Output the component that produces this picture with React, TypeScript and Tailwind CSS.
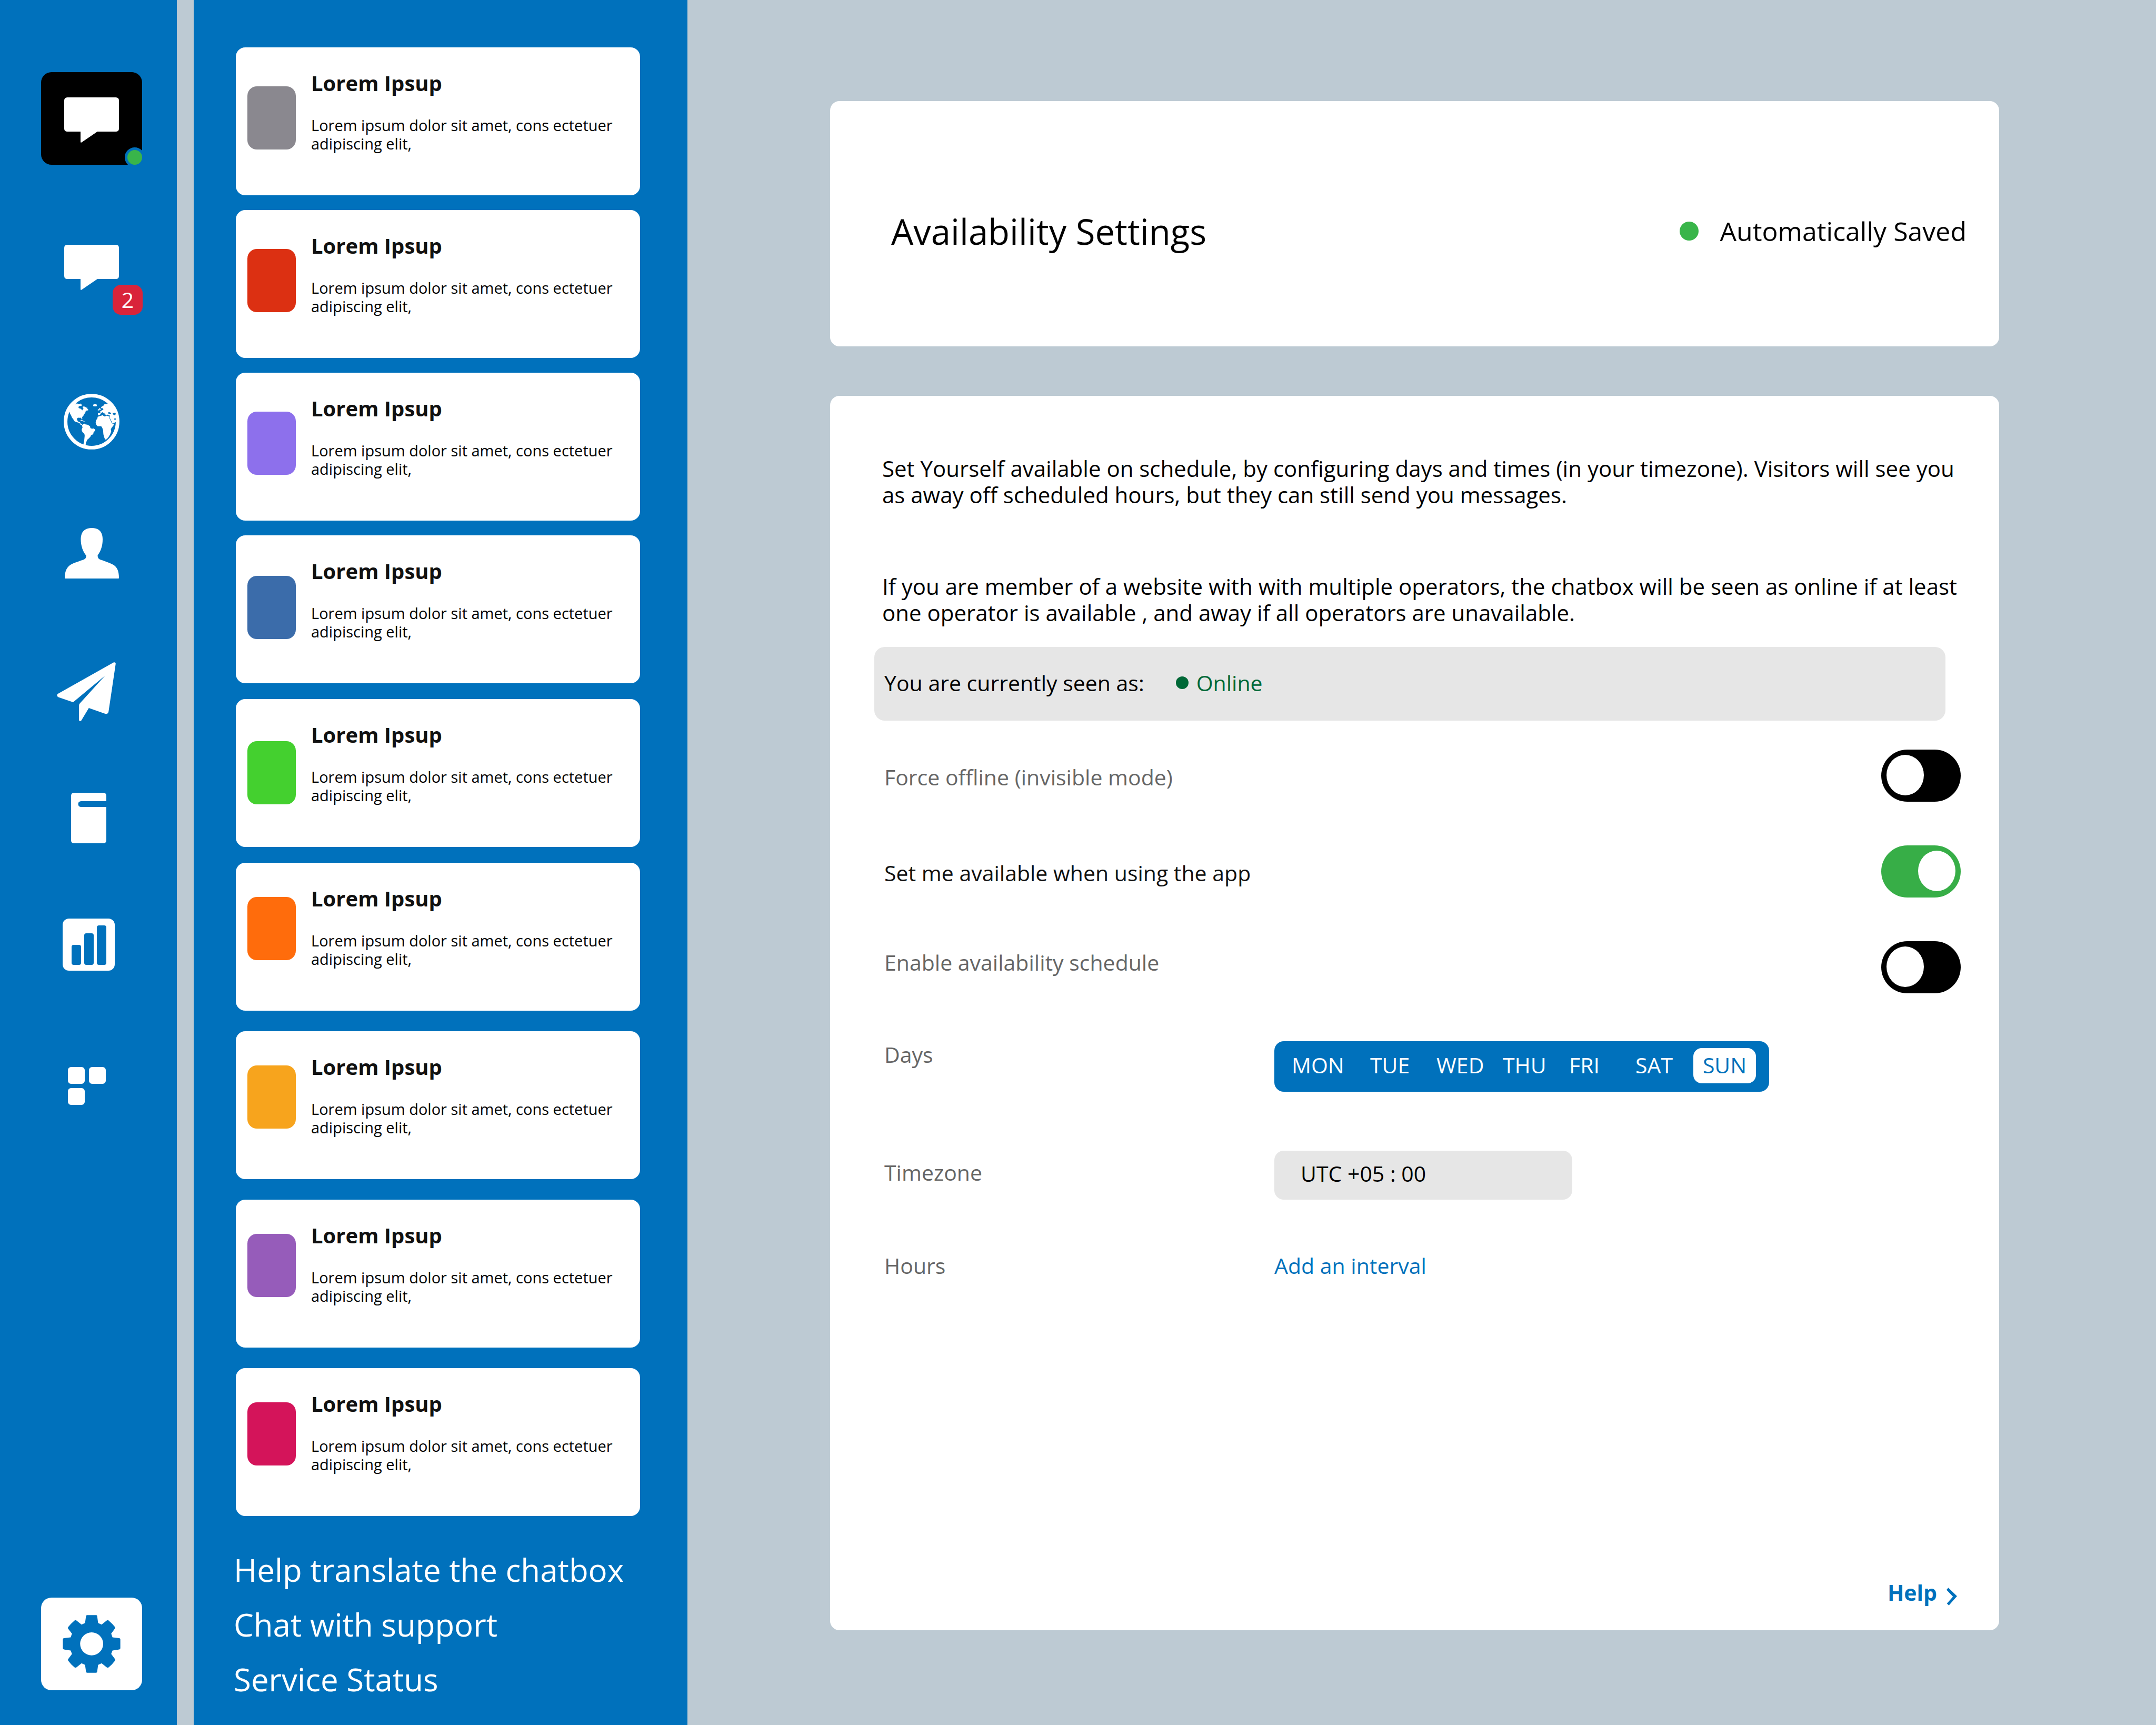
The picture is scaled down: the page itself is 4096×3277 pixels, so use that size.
import React, { useState } from "react";

const BubbleIcon = () => (
  <svg viewBox="0 0 104 86" className="h-[86px] w-[104px]" fill="#fff" aria-hidden="true">
    <path d="M6 0H98Q104 0 104 6V59Q104 65 98 65H63L33 85.5Q31 86.5 31 84.5V65H6Q0 65 0 59V6Q0 0 6 0Z" />
  </svg>
);

const GlobeIcon = () => (
  <svg viewBox="25 30 412 412" className="size-[106px]" fill="#fff" aria-hidden="true">
    <circle cx="231" cy="236" r="192" fill="none" stroke="#fff" strokeWidth="27" />
    <path d="M67 160L72 178L80 190L85 204L98 221L106 234L120 240L133 243L143 248L147 256L156 262L164 260L152 250L147 250L146 240L134 237L128 230L123 220L124 212L132 207L145 208L152 207L156 214L160 222L163 216L160 206L166 196L172 190L176 180L184 173L180 168L192 166L186 160L190 155L206 152L206 147L198 138L200 132L190 133L184 126L176 124L166 124L166 134L172 140L166 144L164 152L158 150L154 142L140 138L134 132L136 124L146 120L158 120L156 106L152 110L148 102L140 108L136 104L130 106L124 100L112 110L122 96L90 98L60 130Z" />
    <path d="M146 226L160 224L176 233L164 232L152 229ZM164 236L182 234L186 237L168 239Z" />
    <path d="M160 262L170 254L180 251L186 256L200 258L214 266L220 272L222 284L234 288L246 287L256 292L257 303L246 314L243 328L226 338L222 348L210 360L198 370L194 382L188 392L190 400L186 408L192 418L168 416L176 380L180 340L178 326L166 316L159 304L158 292L164 280Z" />
    <path d="M276 200L300 192L314 188L320 194L328 198L342 192L358 196L366 214L376 236L384 250L396 252L394 262L380 280L373 292L376 308L370 324L362 340L352 358L338 370L330 366L322 346L318 328L316 300L310 282L302 270L276 270L266 260L261 244L264 226L274 212Z" />
    <path d="M352 104L326 108L318 118L304 126L300 136L316 138L318 148L300 156L292 164L300 174L310 166L320 172L326 184L326 172L330 170L334 186L344 190L344 180L350 188L366 190L362 204L372 222L384 248L400 244L414 236L425 236L425 170L400 120Z" />
    <path d="M278 174L292 171L300 174L292 187L278 189ZM286 138L294 136L299 150L288 152ZM277 146L285 144L285 152L277 154Z" />
    <rect x="243" y="108" width="27" height="15" rx="6" />
    <path d="M352 168L362 166L376 172L374 179L354 177ZM386 172L396 174L404 168L410 178L404 190L396 186L388 182Z" fill="#0071bc" />
    <circle cx="404" cy="217" r="6" fill="#0071bc" />
    <path d="M359 200Q372 222 382 248M324 377Q350 364 366 340" fill="none" stroke="#0071bc" strokeWidth="3" />
  </svg>
);

const PersonIcon = () => (
  <svg viewBox="87 18 402 374" className="h-24 w-[103px]" fill="#fff" aria-hidden="true">
    <path d="M288 18C236 18 206 45 206 103C206 150 222 195 246 222C246 240 240 248 226 253C195 264 160 275 140 285C105 302 87 335 87 388Q87 392 91 392H485Q489 392 489 388C489 335 475 302 436 285C412 274 380 262 352 253C338 248 331 240 331 220C355 190 368 150 368 103C368 45 340 18 288 18Z" />
  </svg>
);

const PlaneIcon = () => (
  <svg viewBox="30 1013 474 439" className="h-28 w-[121px]" fill="#fff" aria-hidden="true">
    <path d="M452 1015Q468 1010 468 1025L415 1380Q411 1402 388 1396L268 1354L212 1447Q205 1455 195 1447V1335Q195 1327 201 1320L390 1112L157 1306Q151 1312 145 1309L42 1274Q24 1263 36 1249Z" />
  </svg>
);

const BookIcon = () => (
  <svg viewBox="0 0 67 96" className="h-24 w-[67px]" fill="#fff" aria-hidden="true">
    <path d="M6 0H61Q67 0 67 6V16H19a5.5 5.5 0 0 0 0 11H67V90Q67 96 61 96H6Q0 96 0 90V6Q0 0 6 0Z" />
  </svg>
);

const ChartIcon = () => (
  <svg viewBox="0 0 99 99" className="size-[99px]" aria-hidden="true">
    <rect width="99" height="99" rx="12" fill="#fff" />
    <g fill="#0071bc">
      <rect x="17" y="50" width="18" height="38" rx="4" />
      <rect x="41" y="28" width="18" height="60" rx="4" />
      <rect x="65" y="13" width="18" height="75" rx="4" />
    </g>
  </svg>
);

const BlocksIcon = () => (
  <svg viewBox="0 0 78 72" className="h-[72px] w-[78px]" fill="#fff" aria-hidden="true">
    <rect width="32" height="32" rx="6" />
    <rect x="40" width="32" height="32" rx="6" />
    <rect y="40" width="32" height="32" rx="6" />
  </svg>
);

const GearIcon = () => (
  <svg viewBox="462 436 429 430" className="size-[110px]" fill="#0071bc" aria-hidden="true">
    <path
      fillRule="evenodd"
      d="M643 437H711Q718 437 718 445L725 496L751 507L789 477Q797 471 803 477Q832 502 850 525Q855 531 849 538L822 575L832 602L882 608Q890 609 890 617V683Q890 691 882 692L832 700L822 725L851 764Q855 770 850 776Q830 803 803 825Q797 829 789 825L751 795L725 806L718 856Q717 865 709 865H644Q636 865 635 856L628 806L602 795L564 825Q557 829 550 825Q523 803 503 776Q499 770 502 764L531 725L521 700L471 692Q463 691 463 683V617Q463 609 471 608L521 602L531 575L502 538Q498 531 503 525Q521 502 550 477Q557 471 564 477L602 507L628 496L635 445Q636 437 643 437ZM677 565a85.500 85.500 0 1 0 0 171a85.500 85.500 0 1 0 0-171Z"
    />
  </svg>
);

const conversations = [
  { swatch: "bg-[#8a888f]", top: "mt-[74px]", gap: "" },
  { swatch: "bg-[#dc3012]", top: "mt-[74px]", gap: "mt-[28px]" },
  { swatch: "bg-[#8d70ec]", top: "mt-[74px]", gap: "mt-[28px]" },
  { swatch: "bg-[#3b6caa]", top: "mt-[77px]", gap: "mt-[28px]" },
  { swatch: "bg-[#44d02f]", top: "mt-[80px]", gap: "mt-[30px]" },
  { swatch: "bg-[#ff6c0c]", top: "mt-[65px]", gap: "mt-[30px]" },
  { swatch: "bg-[#f7a41d]", top: "mt-[65px]", gap: "mt-[39px]" },
  { swatch: "bg-[#965cba]", top: "mt-[65px]", gap: "mt-[39px]" },
  { swatch: "bg-[#d4145a]", top: "mt-[65px]", gap: "mt-[39px]" },
];

const days = [
  { name: "MON", width: "w-[149px]" },
  { name: "TUE", width: "w-[126px]" },
  { name: "WED", width: "w-[126px]" },
  { name: "THU", width: "w-[126px]" },
  { name: "FRI", width: "w-[126px]" },
  { name: "SAT", width: "w-[110px]" },
];

function Rail() {
  return (
    <nav aria-label="Main" className="flex w-[336px] shrink-0 flex-col items-center bg-[#0071bc] pt-[137px] pb-[66px]">
      <div className="flex flex-col items-center pl-3">
        <a href="#inbox" aria-label="Inbox" className="relative flex h-44 w-48 items-center justify-center rounded-[20px] bg-black pt-[6px]">
          <BubbleIcon />
          <span className="absolute -right-[5px] -bottom-[5px] size-[38px] rounded-full border-[5px] border-[#0071bc] bg-[#39b54a]" />
        </a>
        <a href="#messages" aria-label="Messages, 2 unread" className="relative mt-[152px]">
          <BubbleIcon />
          <span className="absolute top-[76px] left-[92px] flex size-[57px] items-center justify-center rounded-2xl bg-[#d9243a] text-[41px] text-white">2</span>
        </a>
        <a href="#visitors" aria-label="Visitors" className="mt-[197px]"><GlobeIcon /></a>
        <a href="#contacts" aria-label="Contacts" className="mt-[149px]"><PersonIcon /></a>
      </div>
      <a href="#campaigns" aria-label="Campaigns" className="mt-[159px]"><PlaneIcon /></a>
      <a href="#helpdesk" aria-label="Helpdesk" className="mt-[136px]"><BookIcon /></a>
      <a href="#analytics" aria-label="Analytics" className="mt-[143px]"><ChartIcon /></a>
      <a href="#plugins" aria-label="Plugins" className="mt-[183px]"><BlocksIcon /></a>
      <div className="mt-auto pl-3">
        <a href="#settings" aria-label="Settings" className="flex h-44 w-48 items-center justify-center rounded-[20px] bg-white">
          <GearIcon />
        </a>
      </div>
    </nav>
  );
}

function Sidebar() {
  return (
    <aside className="ml-8 flex w-[938px] shrink-0 flex-col bg-[#0071bc] pt-[90px]">
      <ul className="flex flex-col pr-[90px] pl-20">
        {conversations.map((c) => (
          <li key={c.swatch} className={c.gap}>
            <a href="#conversation" className="flex h-[281px] items-start gap-[29px] rounded-[18px] bg-white pl-[22px]">
              <span className={`h-[120px] w-[92px] shrink-0 rounded-[18px] ${c.swatch} ${c.top}`} />
              <span className="flex flex-col gap-[38px] pt-[44px]">
                <strong className="text-[40px] leading-[48px] font-bold text-[#111]">Lorem Ipsup</strong>
                <span className="w-[600px] text-[29px] leading-[35px]">Lorem ipsum dolor sit amet, cons ectetuer adipiscing elit,</span>
              </span>
            </a>
          </li>
        ))}
      </ul>
      <div className="mt-[66px] flex flex-col gap-[32px] pl-[76px] text-[60px] leading-[72px] text-white">
        <a href="#translate">Help translate the chatbox</a>
        <a href="#support">Chat with support</a>
        <a href="#status">Service Status</a>
      </div>
    </aside>
  );
}

function Switch({ id, checked, onChange }: { id: string; checked: boolean; onChange: (v: boolean) => void }) {
  return (
    <input
      id={id}
      type="checkbox"
      role="switch"
      checked={checked}
      onChange={(e) => onChange(e.target.checked)}
      className="flex h-[99px] w-[151px] shrink-0 appearance-none items-start rounded-full bg-black px-[10px] pt-[10px] before:h-[77px] before:w-[71px] before:rounded-[50%] before:bg-white before:content-[''] checked:justify-end checked:bg-[#37ae47]"
    />
  );
}

function Settings() {
  const [offline, setOffline] = useState(false);
  const [inApp, setInApp] = useState(true);
  const [schedule, setSchedule] = useState(false);
  return (
    <section className="mt-[94px] flex flex-1 flex-col rounded-[18px] bg-white pt-[113px] pb-[47px] pl-[84px] text-[41px] leading-[50px]">
      <div className="flex flex-col gap-[124px] pr-[64px] pl-[15px] text-[42px] leading-[50px]">
        <p>Set Yourself available on schedule, by configuring days and times (in your timezone). Visitors will see you as away off scheduled hours, but they can still send you messages.</p>
        <p>If you are member of a website with with multiple operators, the chatbox will be seen as online if at least one operator is available , and away if all operators are unavailable.</p>
      </div>
      <div className="mt-10 mr-[102px] flex h-[140px] items-center rounded-[20px] bg-[#e6e6e6] pb-1 pl-[19px]">
        <span>You are currently seen as:</span>
        <span className="ml-[60px] size-6 rounded-full bg-[#006837]" />
        <span className="ml-[15px] text-[#006837]">Online</span>
      </div>
      <div className="mt-[55px] flex flex-col gap-[83px] pr-[73px] pl-[19px]">
        <div className="flex items-center justify-between">
          <label htmlFor="offline" className="pt-1 text-[#666]">Force offline (invisible mode)</label>
          <Switch id="offline" checked={offline} onChange={setOffline} />
        </div>
        <div className="flex items-center justify-between">
          <label htmlFor="in-app" className="pt-1 text-[#111]">Set me available when using the app</label>
          <Switch id="in-app" checked={inApp} onChange={setInApp} />
        </div>
        <div className="flex items-center justify-between">
          <label htmlFor="schedule" className="pb-[20px] text-[#666]">Enable availability schedule</label>
          <Switch id="schedule" checked={schedule} onChange={setSchedule} />
        </div>
      </div>
      <div className="mt-[91px] grid grid-cols-[741px_1fr] items-start pl-[19px]">
        <span id="days-label" className="text-[#666]">Days</span>
        <div role="group" aria-labelledby="days-label" className="flex h-24 items-start justify-self-start rounded-[18px] bg-[#0071bc] pt-[13px] pr-[25px] pl-[33px] text-white">
          {days.map((d) => (
            <button key={d.name} type="button" aria-pressed="false" className={`h-[67px] pb-[3px] text-left ${d.width}`}>{d.name}</button>
          ))}
          <button type="button" aria-pressed="true" className="h-[67px] w-[119px] rounded-2xl bg-white pb-[3px] text-center text-[#0071bc]">SUN</button>
        </div>
      </div>
      <div className="mt-[112px] grid grid-cols-[741px_1fr] items-center pl-[19px]">
        <label htmlFor="timezone" className="pb-3 text-[#666]">Timezone</label>
        <select id="timezone" className="h-[93px] w-[566px] appearance-none rounded-[18px] bg-[#e6e6e6] pb-2 pl-[50px]">
          <option>UTC +05 : 00</option>
        </select>
      </div>
      <div className="mt-[100px] grid grid-cols-[741px_1fr] pl-[19px]">
        <span className="text-[#666]">Hours</span>
        <button type="button" className="justify-self-start text-[#0071bc]">Add an interval</button>
      </div>
      <a href="#help" className="mt-auto mr-[80px] flex items-center gap-[18px] self-end font-bold text-[#0071bc]">
        Help
        <svg viewBox="643 138 80 134" className="mt-4 h-[34px] w-[20px]" fill="currentColor" aria-hidden="true">
          <path d="M657 138L723 202L661 272L646 258L692 206L643 154Z" />
        </svg>
      </a>
    </section>
  );
}

export default function App() {
  return (
    <div className="flex min-h-screen w-full bg-[#bdcad3] font-['Open_Sans',sans-serif] text-black">
      <Rail />
      <Sidebar />
      <main className="flex flex-1 flex-col pt-[192px] pr-[298px] pb-[180px] pl-[271px]">
        <header className="flex h-[466px] items-center justify-between rounded-[18px] bg-white pt-[28px] pr-[62px] pl-[116px]">
          <h1 className="text-[67px] leading-[80px]">Availability Settings</h1>
          <p className="flex items-center gap-10 text-[50px] leading-[60px]">
            <span className="size-9 rounded-full bg-[#39b54a]" />
            Automatically Saved
          </p>
        </header>
        <Settings />
      </main>
    </div>
  );
}
